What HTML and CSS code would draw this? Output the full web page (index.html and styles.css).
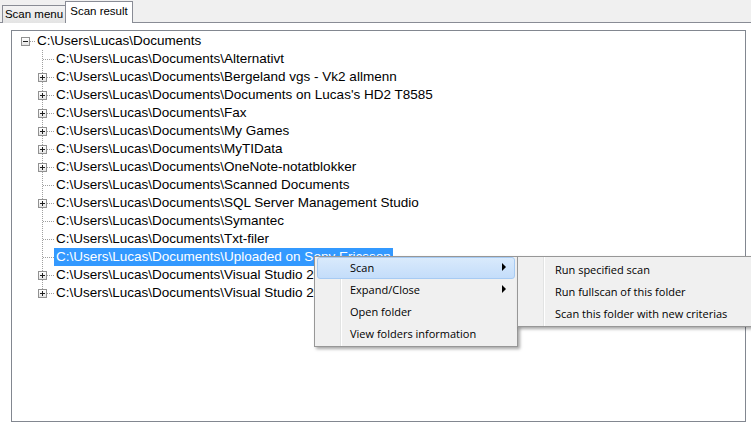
FILE: index.html
```html
<!DOCTYPE html>
<html>
<head>
<meta charset="utf-8">
<link rel="stylesheet" href="styles.css">
</head>
<body>
<div class="window">
  <div class="tabstrip">
    <div class="tab">Scan menu</div>
    <div class="tab active">Scan result</div>
  </div>
  <div class="page">
    <div class="tree">
      <div class="row root">
        <span class="conn"><span class="box minus"></span></span>
        <span class="label">C:\Users\Lucas\Documents</span>
      </div>
      <div class="children">
        <div class="row"><span class="conn"></span><span class="label">C:\Users\Lucas\Documents\Alternativt</span></div>
        <div class="row"><span class="conn"><span class="box"></span></span><span class="label">C:\Users\Lucas\Documents\Bergeland vgs - Vk2 allmenn</span></div>
        <div class="row"><span class="conn"><span class="box"></span></span><span class="label">C:\Users\Lucas\Documents\Documents on Lucas's HD2 T8585</span></div>
        <div class="row"><span class="conn"><span class="box"></span></span><span class="label">C:\Users\Lucas\Documents\Fax</span></div>
        <div class="row"><span class="conn"><span class="box"></span></span><span class="label">C:\Users\Lucas\Documents\My Games</span></div>
        <div class="row"><span class="conn"><span class="box"></span></span><span class="label">C:\Users\Lucas\Documents\MyTIData</span></div>
        <div class="row"><span class="conn"><span class="box"></span></span><span class="label">C:\Users\Lucas\Documents\OneNote-notatblokker</span></div>
        <div class="row"><span class="conn"></span><span class="label">C:\Users\Lucas\Documents\Scanned Documents</span></div>
        <div class="row"><span class="conn"><span class="box"></span></span><span class="label">C:\Users\Lucas\Documents\SQL Server Management Studio</span></div>
        <div class="row"><span class="conn"></span><span class="label">C:\Users\Lucas\Documents\Symantec</span></div>
        <div class="row"><span class="conn"></span><span class="label">C:\Users\Lucas\Documents\Txt-filer</span></div>
        <div class="row"><span class="conn"></span><span class="label selected">C:\Users\Lucas\Documents\Uploaded on Sony Ericsson</span></div>
        <div class="row"><span class="conn"><span class="box"></span></span><span class="label">C:\Users\Lucas\Documents\Visual Studio 2008</span></div>
        <div class="row last"><span class="conn"><span class="box"></span></span><span class="label">C:\Users\Lucas\Documents\Visual Studio 2010</span></div>
      </div>
    </div>
  </div>

  <div class="menu main-menu">
    <div class="item hot"><span class="text">Scan</span><span class="arrow"></span></div>
    <div class="item"><span class="text">Expand/Close</span><span class="arrow"></span></div>
    <div class="item"><span class="text">Open folder</span></div>
    <div class="item"><span class="text">View folders information</span></div>
  </div>
  <div class="menu sub-menu">
    <div class="item"><span class="text">Run specified scan</span></div>
    <div class="item"><span class="text">Run fullscan of this folder</span></div>
    <div class="item"><span class="text">Scan this folder with new criterias</span></div>
  </div>
</div>
</body>
</html>
```
FILE: styles.css
```css
html, body {
  margin: 0;
  padding: 0;
  background: #ffffff;
}
.window {
  position: relative;
  width: 751px;
  height: 431px;
  overflow: hidden;
  background: #ffffff;
  font-family: "Liberation Sans", Arial, sans-serif;
}
.tabstrip {
  height: 22px;
  background: #f0f0f0;
  border-bottom: 1px solid #898c95;
  display: flex;
  align-items: flex-end;
  padding-left: 2px;
}
.tab {
  flex: none;
  box-sizing: border-box;
  width: 64px;
  height: 18px;
  margin-bottom: -1px;
  border: 1px solid #898c95;
  border-bottom: none;
  background: linear-gradient(#f3f3f3, #e4e4e4);
  font-size: 11.5px;
  line-height: 17px;
  text-align: center;
  white-space: nowrap;
  color: #000;
}
.tab.active {
  width: 68px;
  height: 22px;
  margin-left: -1px;
  background: #ffffff;
  line-height: 18px;
}
.page {
  padding: 7px 5px 0 11px;
}
.tree {
  box-sizing: border-box;
  height: 392px;
  border: 1px solid #828790;
  padding-top: 1px;
  font-size: 13.5px;
}
.row {
  display: flex;
  height: 18px;
  padding-left: 26px;
}
.row.root {
  padding-left: 9px;
}
.conn {
  flex: none;
  display: flex;
  align-items: flex-start;
  width: 16px;
  height: 18px;
  background:
    repeating-linear-gradient(to bottom, #a0a0a0 0 1px, transparent 1px 2px) 4px 0 / 1px 18px no-repeat,
    repeating-linear-gradient(to right, #a0a0a0 0 1px, transparent 1px 2px) 5px 9px / 11px 1px no-repeat;
}
.row.last .conn {
  background:
    repeating-linear-gradient(to bottom, #a0a0a0 0 1px, transparent 1px 2px) 4px 0 / 1px 9px no-repeat,
    repeating-linear-gradient(to right, #a0a0a0 0 1px, transparent 1px 2px) 5px 9px / 11px 1px no-repeat;
}
.row.root .conn {
  width: 14px;
  background:
    repeating-linear-gradient(to right, #a0a0a0 0 1px, transparent 1px 2px) 9px 9px / 5px 1px no-repeat;
}
.box {
  box-sizing: border-box;
  width: 9px;
  height: 9px;
  margin-top: 5px;
  border: 1px solid #919191;
  background:
    linear-gradient(#202020, #202020) center / 5px 1px no-repeat,
    linear-gradient(#202020, #202020) center / 1px 5px no-repeat,
    linear-gradient(#ffffff, #e4e4e4);
}
.box.minus {
  background:
    linear-gradient(#202020, #202020) center / 5px 1px no-repeat,
    linear-gradient(#ffffff, #e4e4e4);
}
.label {
  padding: 0 2px;
  line-height: 18px;
  white-space: nowrap;
  color: #000;
}
.label.selected {
  background: #3399ff;
  color: #ffffff;
}
.menu {
  position: absolute;
  box-sizing: border-box;
  border: 1px solid #979797;
  background:
    linear-gradient(#e2e3e3, #e2e3e3) 25px 0 / 1px 100% no-repeat,
    linear-gradient(#ffffff, #ffffff) 26px 0 / 1px 100% no-repeat,
    #f0f0f0;
  box-shadow: 2px 2px 3px rgba(0, 0, 0, 0.35);
  padding: 0 1px;
  font-family: "Open Sans", "Noto Sans", sans-serif;
  font-size: 11px;
  color: #000;
}
.main-menu {
  left: 314px;
  top: 256px;
  width: 204px;
  height: 91px;
}
.sub-menu {
  left: 517px;
  top: 256px;
  width: 250px;
  height: 71px;
  padding-top: 2px;
}
.item {
  box-sizing: border-box;
  display: flex;
  align-items: center;
  height: 22px;
  padding-bottom: 2px;
  border: 1px solid transparent;
  border-radius: 3px;
  margin: 0 1px;
}
.main-menu .item {
  padding-left: 32px;
  padding-right: 8px;
}
.sub-menu .item {
  padding-left: 34px;
  padding-bottom: 1px;
}
.item.hot {
  background: linear-gradient(#d9eafc, #c4ddfa);
  border-color: #a7cbf3;
}
.item .text {
  flex: 1;
  white-space: nowrap;
}
.arrow {
  width: 0;
  height: 0;
  border-left: 4px solid #000;
  border-top: 4px solid transparent;
  border-bottom: 4px solid transparent;
}
```
